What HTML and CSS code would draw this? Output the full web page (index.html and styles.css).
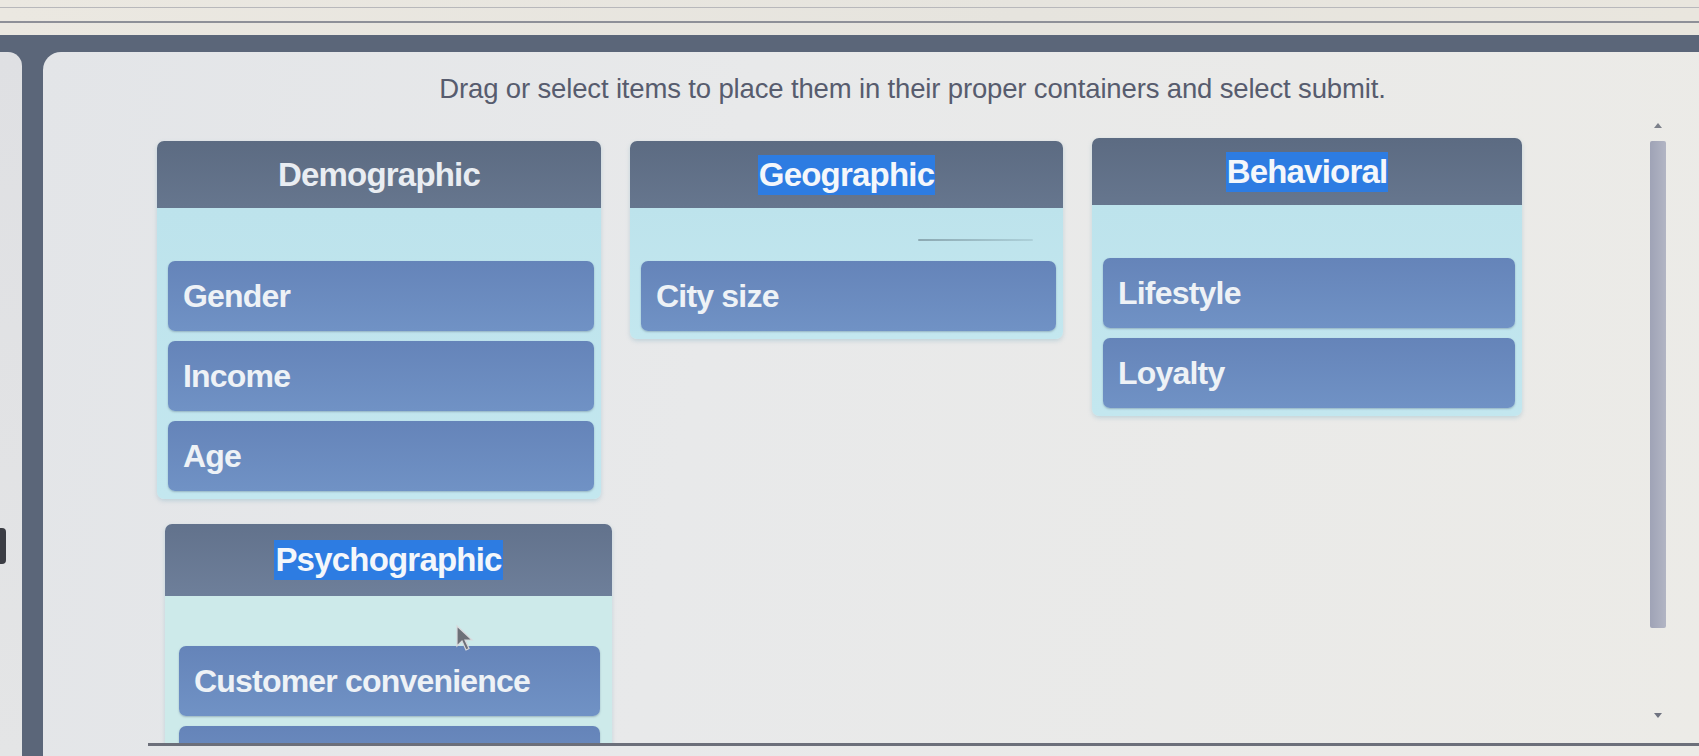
FILE: index.html
```html
<!DOCTYPE html>
<html lang="en">
<head>
<meta charset="utf-8">
<title>Drag and drop</title>
<link rel="stylesheet" href="styles.css">
</head>
<body>
<div class="screen">
  <div class="topbar">
    <div class="rule rule-a"></div>
    <div class="rule rule-b"></div>
  </div>
  <div class="main">
    <div class="side-left"><div class="side-notch"></div></div>
    <div class="panel">
      <p class="instructions">Drag or select items to place them in their proper containers and select submit.</p>
      <div class="scroller">
        <div class="board">
          <section class="bucket">
            <h2 class="bucket-head">Demographic</h2>
            <div class="bucket-body">
              <div class="item">Gender</div>
              <div class="item">Income</div>
              <div class="item">Age</div>
            </div>
          </section>
          <section class="bucket">
            <h2 class="bucket-head"><span class="sel">Geographic</span></h2>
            <div class="bucket-body smudge">
              <div class="item">City size</div>
            </div>
          </section>
          <section class="bucket bucket-raised">
            <h2 class="bucket-head"><span class="sel">Behavioral</span></h2>
            <div class="bucket-body">
              <div class="item">Lifestyle</div>
              <div class="item">Loyalty</div>
            </div>
          </section>
          <section class="bucket bucket-psy">
            <h2 class="bucket-head"><span class="sel">Psychographic</span></h2>
            <div class="bucket-body pale">
              <div class="item">Customer convenience</div>
              <div class="item"></div>
            </div>
          </section>
        </div>
        <div class="scrollbar">
          <span class="arrow up"></span>
          <div class="thumb"></div>
          <span class="arrow down"></span>
        </div>
        <svg class="cursor" width="22" height="28" viewBox="0 0 22 28"><path d="M3 2 L3 22 L8 17 L12 26 L15 24.5 L11 16 L18 16 Z" fill="#6d7078" stroke="#d8d9dc" stroke-width="1.2"/></svg>
      </div>
    </div>
  </div>
</div>
</body>
</html>
```

FILE: styles.css
```css
* { box-sizing: border-box; }
html, body { margin: 0; padding: 0; }
body {
  width: 1699px;
  height: 756px;
  overflow: hidden;
  font-family: "Liberation Sans", Arial, sans-serif;
  background: #e8e6e0;
}
.screen { width: 1699px; height: 756px; display: flex; flex-direction: column; }

.topbar {
  height: 35px;
  background: linear-gradient(90deg, #ebe8e1, #e6e4de 60%, #e9e6de);
  padding-top: 7px;
  display: flex;
  flex-direction: column;
  gap: 13px;
}
.rule { height: 1px; background: #b8b8bb; }
.rule-b { height: 2px; background: #8e9098; }

.main {
  flex: 1;
  display: flex;
  background: #5b6679;
  padding-top: 17px;
  gap: 21px;
}
.side-left {
  width: 22px;
  background: linear-gradient(#dfe0e3, #e4e5e6);
  border-top-right-radius: 14px;
  display: flex;
  flex-direction: column;
  justify-content: flex-start;
  padding-top: 476px;
}
.side-notch {
  width: 6px;
  height: 36px;
  background: #3b3d44;
  border-radius: 0 4px 4px 0;
}
.panel {
  flex: 1;
  background: linear-gradient(100deg, #e3e5e8 0%, #e8e9ea 40%, #ecebe7 100%);
  border-top-left-radius: 18px;
  display: flex;
  flex-direction: column;
  padding-top: 22px;
}
.instructions {
  margin: 0 0 0 105px;
  padding-right: 22px;
  text-align: center;
  font-size: 27.5px;
  line-height: 30px;
  color: #575c6e;
  letter-spacing: -0.15px;
}
.scroller {
  position: relative;
  margin-top: 14px;
  margin-left: 105px;
  height: 628px;
  border-bottom: 3px solid #6c6f7a;
  overflow: hidden;
  display: flex;
}
.board {
  padding: 23px 0 0 9px;
  display: grid;
  grid-template-columns: 444px 433px 430px;
  column-gap: 29px;
  row-gap: 25px;
  align-items: start;
  align-content: start;
}
.bucket {
  border-radius: 7px;
  box-shadow: 0 2px 4px rgba(120, 170, 190, 0.35);
}
.bucket-raised { margin-top: -3px; }
.bucket-psy { margin-left: 8px; width: 447px; }
.bucket-head {
  margin: 0;
  height: 67px;
  background: linear-gradient(#5c6b82, #66768e);
  border-radius: 7px 7px 0 0;
  display: flex;
  align-items: center;
  justify-content: center;
  font-size: 33px;
  font-weight: bold;
  color: #e9edf2;
  letter-spacing: -0.8px;
}
.bucket-psy .bucket-head { height: 72px; background: linear-gradient(#62728c, #6e7f9a); }
.sel {
  background: #2d7ce2;
  color: #f4f7fb;
  padding: 1px 1px;
}
.bucket-body {
  position: relative;
  background: linear-gradient(#bde3ec, #c3e7ef);
  border-radius: 0 0 7px 7px;
  padding: 53px 7px 8px 11px;
  display: flex;
  flex-direction: column;
  gap: 10px;
}
.bucket-body.pale { background: #cdeaea; padding-top: 50px; padding-left: 14px; padding-right: 12px; }
.smudge::before {
  content: "";
  position: absolute;
  top: 31px;
  right: 30px;
  width: 115px;
  height: 2px;
  background: linear-gradient(90deg, rgba(90,110,120,0.5), rgba(120,150,160,0.25));
  border-radius: 1px;
}
.item {
  height: 70px;
  border-radius: 7px;
  background: linear-gradient(#6584b9, #7092c5);
  color: #eef2f6;
  font-size: 32px;
  font-weight: bold;
  letter-spacing: -0.8px;
  display: flex;
  align-items: center;
  padding-left: 15px;
  box-shadow: 0 1px 2px rgba(60, 80, 110, 0.35);
}
.scrollbar {
  margin-left: auto;
  margin-right: 32px;
  width: 18px;
  display: flex;
  flex-direction: column;
  align-items: center;
}
.arrow {
  width: 0;
  height: 0;
  border-left: 4px solid transparent;
  border-right: 4px solid transparent;
}
.arrow.up { margin-top: 5px; border-bottom: 5px solid #7c808a; }
.thumb {
  margin-top: 13px;
  width: 16px;
  height: 487px;
  background: linear-gradient(90deg, #9fa3b6, #b2b5c4);
  border-radius: 2px;
}
.arrow.down { margin-top: 85px; border-top: 5px solid #6f7380; }
.cursor {
  position: absolute;
  left: 306px;
  top: 506px;
}
```
